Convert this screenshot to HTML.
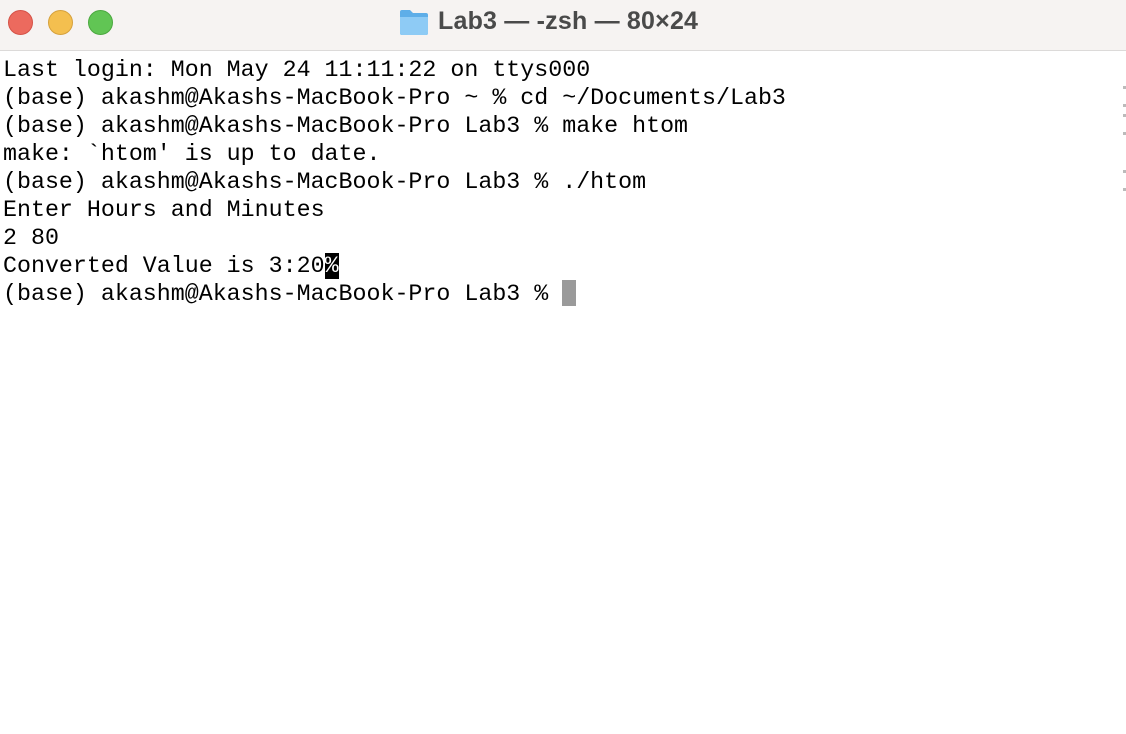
<!DOCTYPE html>
<html><head><meta charset="utf-8"><style>
html,body{margin:0;padding:0;width:1126px;height:734px;overflow:hidden;background:#fff}
.tb{position:absolute;left:0;top:0;width:1126px;height:50px;background:#f6f3f2;border-bottom:1px solid #dcdad9}
.dot{position:absolute;top:10px;width:24px;height:24px;border-radius:50%}
.title{position:absolute;left:438px;top:7px;font:bold 25px "Liberation Sans",sans-serif;color:#4a4a4a;letter-spacing:0.2px}
pre{position:absolute;left:3px;top:56px;margin:0;font:23.3px/28px "Liberation Mono",monospace;color:#000}
.inv{background:#000;color:#fff}
.cur{display:inline-block;width:14px;height:26px;background:#9a9a9a;vertical-align:-6px}
.sd{position:absolute;left:1123px;width:3px;height:3px;background:#bbb}
</style></head><body>
<div class="tb">
<div class="dot" style="left:8px;background:#ec6a5e;border:1px solid #d55247;width:23px;height:23px"></div>
<div class="dot" style="left:48px;background:#f4bf4f;border:1px solid #d6a13c;width:23px;height:23px"></div>
<div class="dot" style="left:88px;background:#61c554;border:1px solid #4ba83f;width:23px;height:23px"></div>
<svg style="position:absolute;left:399px;top:8px" width="30" height="28" viewBox="0 0 30 28"><path d="M1 4 Q1 2 3 2 H11 L14 5 H27 Q29 5 29 7 V25 Q29 27 27 27 H3 Q1 27 1 25Z" fill="#5eaee8"/><path d="M1 9 H29 V25 Q29 27 27 27 H3 Q1 27 1 25Z" fill="#8ecbf5"/></svg>
<div class="title">Lab3 — -zsh — 80×24</div>
</div>
<pre>Last login: Mon May 24 11:11:22 on ttys000
(base) akashm@Akashs-MacBook-Pro ~ % cd ~/Documents/Lab3
(base) akashm@Akashs-MacBook-Pro Lab3 % make htom
make: `htom' is up to date.
(base) akashm@Akashs-MacBook-Pro Lab3 % ./htom
Enter Hours and Minutes
2 80
Converted Value is 3:20<span class="inv">%</span>
(base) akashm@Akashs-MacBook-Pro Lab3 % <span class="cur"></span></pre>
<div class="sd" style="top:86px"></div><div class="sd" style="top:104px"></div><div class="sd" style="top:114px"></div><div class="sd" style="top:132px"></div><div class="sd" style="top:170px"></div><div class="sd" style="top:188px"></div>
</body></html>
